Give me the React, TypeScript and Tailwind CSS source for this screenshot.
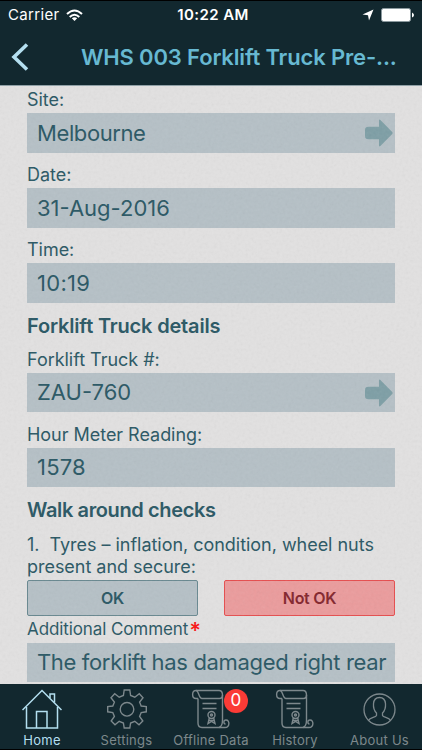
import React from 'react'

const Label = ({ text, className }: { text: string; className: string }) => (
  <div className={`h-[26px] text-[18px] leading-[26px] tracking-[-0.03px] whitespace-pre ${className}`}>
    <span>{text}</span>
  </div>
)

const Field = ({ value, className, arrow }: { value: string; className: string; arrow?: boolean }) => (
  <div className={`flex items-center justify-between bg-[#b5c0c6] pl-[10px] pr-[2px] text-[22px] whitespace-pre ${className}`}>
    <span>{value}</span>
    {arrow && (
      <svg className="h-[28px] w-[28px] shrink-0" viewBox="0 0 28 28" fill="#7d9ea5">
        <path d="M3.500 7.800H14V1.500Q14 -.2 15.400 .9L27.200 13.100Q28 14 27.200 14.900L15.400 27.100Q14 28.200 14 26.500V20.300H3.500Q0 20.300 0 17V11Q0 7.800 3.500 7.800Z" />
      </svg>
    )}
  </div>
)

const Scroll = () => (
  <svg className="h-[40px] w-[40px]" viewBox="0 0 40 40" fill="none" stroke="currentColor" strokeWidth="1.4">
    <path d="M7 9.500H5C.5 9.500 .5 1.500 5 1.500H28C30.500 1.500 31.500 3 31.500 6V31" />
    <path d="M5 1.500C8 1.500 7.500 9.500 11 9.500H28.500C30.500 9.500 31.500 8 31.500 6" />
    <path d="M7 9.500V34C7 37 8 38.500 11 38.500H34C39 38.500 39 31 35 31C32 31 32.500 35 34.500 35" />
    <path d="M31.500 31C31.500 35 31 37.500 28 38.500" />
    <path d="M11.500 14.500H25.500M11.500 19.500H25.500" />
    <circle cx="20.500" cy="26" r="3.500" />
    <circle cx="20.500" cy="26" r="1" />
    <path d="M18.300 29L17 34.500L20.500 32.500L24 34.500L22.700 29M18 31.500H23" />
  </svg>
)

const Tab = ({ name, className, children }: { name: string; className: string; children: React.ReactNode }) => (
  <div className={`relative flex flex-col items-center text-[13px] tracking-[0.25px] ${className}`}>
    {children}
    <span className="mt-[4px] leading-[15px] whitespace-nowrap">{name}</span>
  </div>
)

const App = () => {
  return (
    <div className="relative flex h-[750px] w-[422px] flex-col overflow-hidden bg-[#e2e1e1] font-['Inter',sans-serif] text-[#285663]">
      <header className="h-[85px] shrink-0 border-t border-black bg-[#12282f]">
        <div className="grid h-[28px] grid-cols-3 items-center text-[15px] leading-[28px] text-white">
          <div className="flex items-center pl-[8px]">
            <span className="tracking-[0.35px]">Carrier</span>
            <svg className="ml-[6px] h-[13px] w-[17px]" viewBox="0 0 17 13" fill="none" stroke="white" strokeWidth="2">
              <path d="M1 5Q8.500 -2 16 5" />
              <path d="M3.700 8Q8.500 3.500 13.300 8" />
              <path d="M8.500 12L5.800 9.300Q8.500 7 11.200 9.300Z" fill="white" stroke="none" />
            </svg>
          </div>
          <span className="pl-[4px] text-center font-semibold tracking-[0.4px] whitespace-nowrap">10:22 AM</span>
          <div className="flex items-center justify-end pr-[8px]">
            <svg className="h-[12px] w-[12px]" viewBox="0 0 12 12" fill="white">
              <path d="M11.500 .5L7 11.500L6 6.200L.5 5.500Z" />
            </svg>
            <svg className="ml-[7px] h-[14px] w-[33px]" viewBox="0 0 33 14">
              <rect x=".5" y=".5" width="29" height="13" rx="2" fill="white" stroke="#8b999e" />
              <path d="M31 4.500Q33 5.500 33 7Q33 8.500 31 9.500Z" fill="white" />
            </svg>
          </div>
        </div>
        <div className="flex h-[56px] items-center">
          <svg className="ml-[11px] h-[28px] w-[18px]" viewBox="0 0 18 28" fill="none" stroke="#b4dff0" strokeWidth="3.6">
            <path d="M16 1.500L3 14L16 26.500" />
          </svg>
          <h1 className="ml-[52px] text-[22px] font-semibold tracking-[-0.15px] whitespace-nowrap text-[#67b9d2]">WHS 003 Forklift Truck Pre-...</h1>
        </div>
      </header>

      <main className="relative h-[599px] shrink-0 overflow-hidden border-t border-[#8fa0a6] px-[27px]">
        <Label text="Site:" className="mt-px" />
        <Field value="Melbourne" className="h-[40px] tracking-[-0.4px]" arrow />
        <Label text="Date:" className="mt-[9px]" />
        <Field value="31-Aug-2016" className="h-[40px]" />
        <Label text="Time:" className="mt-[9px]" />
        <Field value="10:19" className="h-[40px] tracking-[0.3px]" />
        <h2 className="mt-[10px] text-[20px] leading-[26px] font-semibold tracking-[-0.18px] whitespace-nowrap">Forklift Truck details</h2>
        <Label text="Forklift Truck #:" className="mt-[8px]" />
        <Field value="ZAU-760" className="h-[39px]" arrow />
        <Label text="Hour Meter Reading:" className="mt-[10px]" />
        <Field value="1578" className="h-[39px] tracking-[0.2px]" />
        <h2 className="mt-[10px] text-[20px] leading-[26px] font-semibold tracking-[-0.38px] whitespace-nowrap">Walk around checks</h2>
        <p className="mt-[11px] text-[18px] leading-[22px] tracking-[-0.03px] whitespace-pre">
          <span>{'1.  Tyres – inflation, condition, wheel nuts'}</span>
          <br />
          <span>present and secure:</span>
        </p>
        <div className="mt-[2px] flex justify-between text-[16px] font-semibold tracking-[-0.3px]">
          <button className="h-[36px] w-[171px] rounded-[2px] border border-[#67878f] bg-[#b5c0c6]">OK</button>
          <button className="h-[36px] w-[171px] rounded-[2px] border border-[#e64c4d] bg-[#eb9b9c] text-[#83242b]">Not OK</button>
        </div>
        <div className="flex h-[27px] items-center pt-px text-[17px] whitespace-nowrap">
          <span className="tracking-[-0.1px]">Additional Comment</span>
          <span className="ml-px text-[22px] leading-[26px] font-semibold text-[#fb1414]">*</span>
        </div>
        <Field value="The forklift has damaged right rear" className="h-[39px] tracking-[-0.34px]" />

        {/* paper grain */}
        <svg className="pointer-events-none absolute inset-0 h-full w-full opacity-10" aria-hidden="true">
          <filter id="grain">
            <feTurbulence type="fractalNoise" baseFrequency="0.35" numOctaves="2" seed="4" />
            <feColorMatrix type="saturate" values="0" />
          </filter>
          <rect width="100%" height="100%" filter="url(#grain)" />
        </svg>
      </main>

      <nav className="flex h-[66px] shrink-0 border-b border-black bg-[#12282f] pt-[5px] text-[#7d888c]">
        <Tab name="Home" className="w-[84px] text-[#b4dff0]">
          <svg className="h-[40px] w-[40px]" viewBox="0 0 40 40" fill="none" stroke="currentColor" strokeWidth="1.5">
            <path d="M.5 21L20 1.500L39.500 21" />
            <path d="M4.500 18V39H35.500V18" />
            <path d="M14.500 39V22.500H25V39" />
            <path d="M28 9V5H32.500V13.500" />
          </svg>
        </Tab>
        <Tab name="Settings" className="w-[85px]">
          <svg className="h-[40px] w-[40px]" viewBox="0 0 40 40" fill="none" stroke="currentColor" strokeWidth="1.4">
            <path d="M17.200 1H22.800L23.600 6.500L27.800 8.200L32.300 4.800L36 8.700L32.600 13.200L34.200 17L39.300 17.600V22.800L34.200 23.600L32.600 27.500L35.800 32L32 35.700L27.800 32.300L23.600 34L22.800 39H17.200L16.400 34L12.200 32.300L8 35.700L4.200 32L7.400 27.500L5.800 23.600L.7 22.800V17.600L5.800 17L7.400 13.200L4 8.700L7.700 4.800L12.200 8.200L16.400 6.500Z" />
            <circle cx="20" cy="20.300" r="6.800" />
          </svg>
        </Tab>
        <Tab name="Offline Data" className="w-[84px]">
          <Scroll />
          <span className="absolute top-0 left-[55px] flex h-[24px] w-[24px] items-center justify-center rounded-full bg-[#fb3b36] text-[17px] text-white">0</span>
        </Tab>
        <Tab name="History" className="w-[84px]">
          <Scroll />
        </Tab>
        <Tab name="About Us" className="w-[85px]">
          <svg className="h-[40px] w-[40px]" viewBox="0 0 40 40" fill="none" stroke="currentColor" strokeWidth="1.300">
            <circle cx="19.500" cy="20.500" r="15.500" />
            <path d="M8.500 31.500C10 28.500 15.500 28.500 16.500 26.500V24C12.500 20 11.500 8.500 19.500 8.500S26.500 20 22.500 24V26.500C23.500 28.500 29 28.500 30.500 31.500" />
          </svg>
        </Tab>
      </nav>
    </div>
  )
}
export default App;
